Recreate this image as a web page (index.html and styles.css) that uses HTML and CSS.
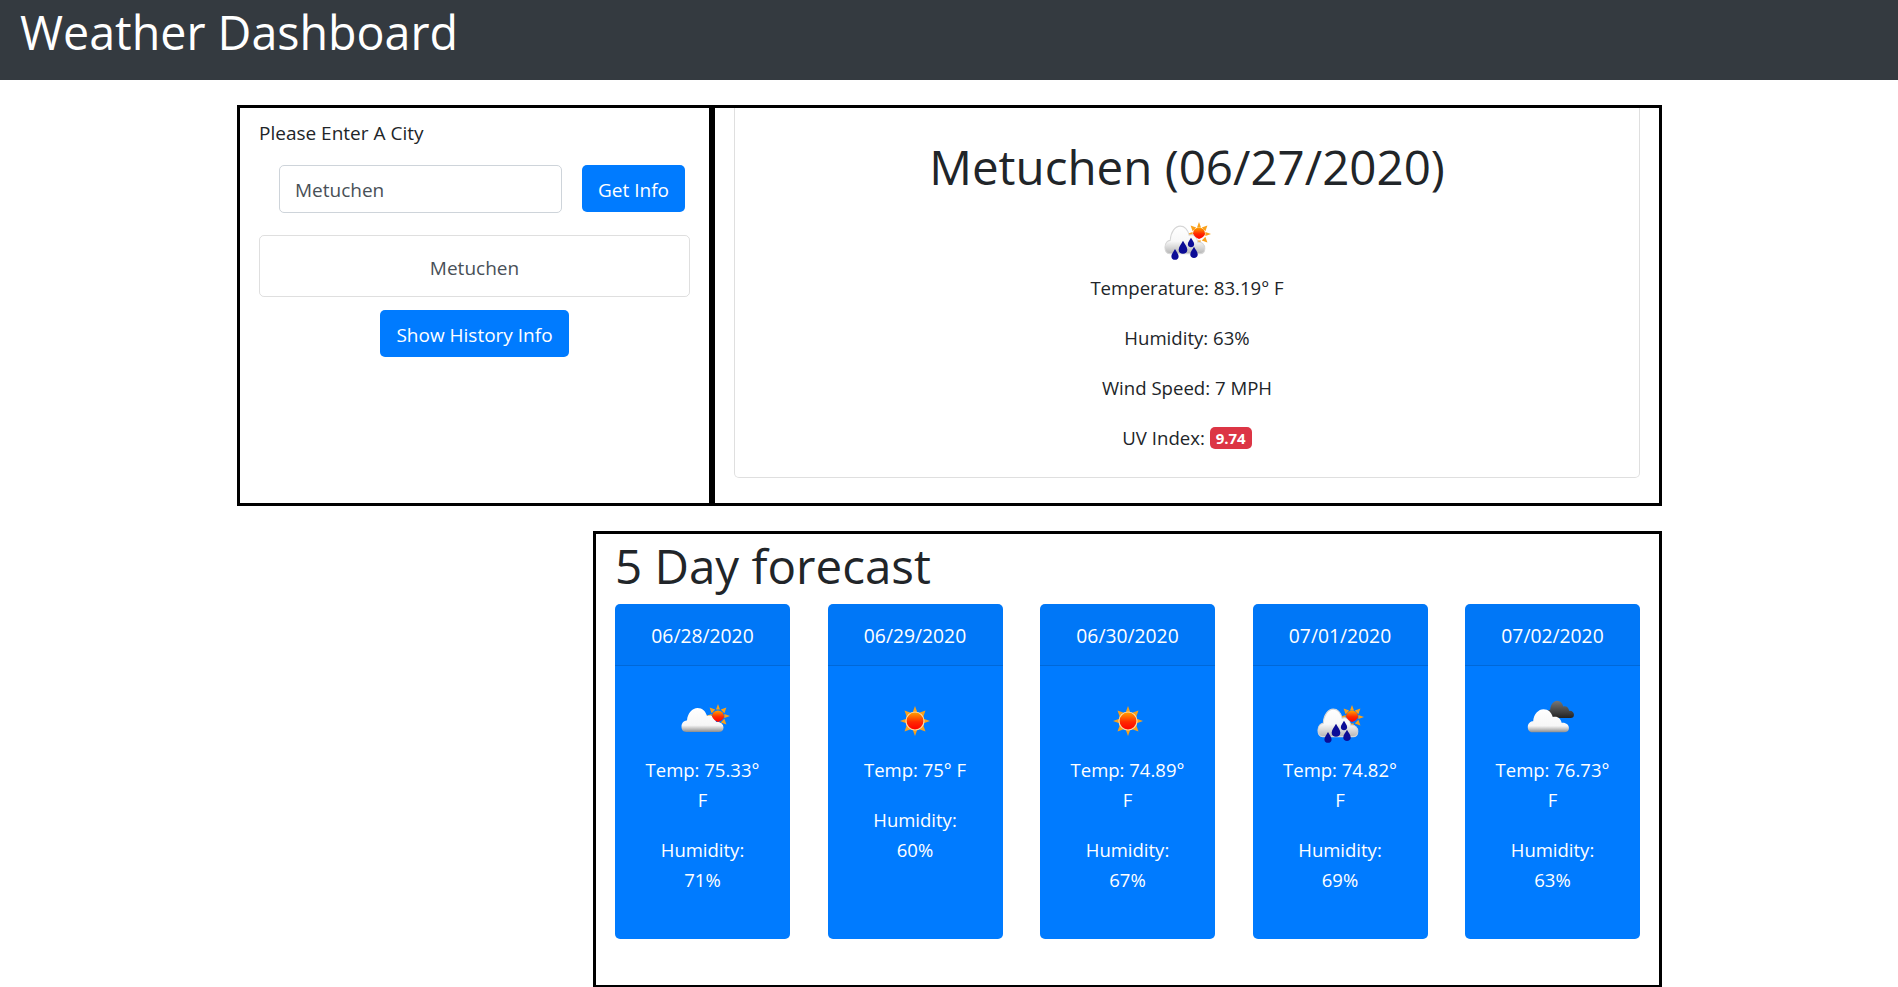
FILE: index.html
```html
<!DOCTYPE html>
<html lang="en">
<head>
  <meta charset="UTF-8">
  <meta name="viewport" content="width=device-width, initial-scale=1.0">
  <title>Weather Dashboard</title>
  <link rel="stylesheet" href="styles.css">
</head>
<body>

  <svg class="icon-defs" width="0" height="0" aria-hidden="true">
    <defs>
      <linearGradient id="cloud-fill" x1="0" y1="0" x2="0" y2="1">
        <stop offset="0" stop-color="#ffffff"/>
        <stop offset="0.72" stop-color="#f6f6f6"/>
        <stop offset="1" stop-color="#8d8d8d"/>
      </linearGradient>
      <linearGradient id="rain-cloud-fill" x1="0" y1="0" x2="0" y2="1">
        <stop offset="0" stop-color="#ffffff"/>
        <stop offset="0.55" stop-color="#f8f8f8"/>
        <stop offset="1" stop-color="#b5b5b5"/>
      </linearGradient>
      <linearGradient id="dark-fill" x1="0" y1="0" x2="0" y2="1">
        <stop offset="0" stop-color="#777777"/>
        <stop offset="0.7" stop-color="#3c3c3c"/>
        <stop offset="1" stop-color="#222222"/>
      </linearGradient>
      <linearGradient id="sun-fill" x1="0" y1="0" x2="0" y2="1">
        <stop offset="0" stop-color="#ffa500"/>
        <stop offset="0.55" stop-color="#ff2a00"/>
        <stop offset="1" stop-color="#ff0000"/>
      </linearGradient>
      <path id="cloud-shape" d="M16 41C12 41 11 38 11 35.500C11 31.500 14 29.500 16.500 29.500C17 22 22 17 27 17C32 17 35 20 36.500 25C41 23.500 45 26.500 45.500 31C50 30.500 53 33 53 36.500C53 39.500 51 41 48 41Z"/>
      <path id="drop-shape" d="M0 -5C1 -3 3 -1 3 1.200C3 3 1.600 4 0 4C-1.600 4 -3 3 -3 1.200C-3 -1 -1 -3 0 -5Z"/>
      <g id="sun-rays" fill="#f9a11b">
        <polygon points="0,-15 2.500,-8 -2.500,-8"/>
        <polygon points="0,15 2.500,8 -2.500,8"/>
        <polygon points="-15,0 -8,2.500 -8,-2.500"/>
        <polygon points="15,0 8,2.500 8,-2.500"/>
        <polygon points="-10.500,-10.500 -3.500,-8 -8,-3.500"/>
        <polygon points="10.500,-10.500 3.500,-8 8,-3.500"/>
        <polygon points="-10.500,10.500 -3.500,8 -8,3.500"/>
        <polygon points="10.500,10.500 3.500,8 8,3.500"/>
      </g>
      <symbol id="icon-clear" viewBox="0 0 62 62">
        <g transform="translate(31 30)">
          <use href="#sun-rays"/>
          <circle r="9" fill="url(#sun-fill)" stroke="#ffd9a0" stroke-width="1.200"/>
        </g>
      </symbol>
      <symbol id="icon-few-clouds" viewBox="0 0 62 62">
        <g transform="translate(46 25) scale(.8)"><use href="#sun-rays"/></g>
        <g transform="translate(-1.500 0)"><use href="#cloud-shape" fill="url(#cloud-fill)"/></g>
        <path d="M40 25.500A6 6 0 0 1 52 25.500C52 28 49 30 46 31C43 30 41 28 40 25.500Z" fill="url(#sun-fill)"/>
      </symbol>
      <symbol id="icon-rain" viewBox="0 0 62 62">
        <g transform="translate(43 26) scale(.8)"><use href="#sun-rays"/></g>
        <g transform="translate(-1.500 -1.500) scale(.95 1.150)"><use href="#cloud-shape" fill="url(#rain-cloud-fill)" stroke="#d6d6d6" stroke-width="1"/></g>
        <path d="M37 25.500A6 6 0 0 1 49 25.500C49 28 46 30 43 31C40 30 38 28 37 25.500Z" fill="url(#sun-fill)"/>
        <g fill="#0c0c96">
          <use href="#drop-shape" transform="translate(19 47) scale(1.200)"/>
          <use href="#drop-shape" transform="translate(27 40) scale(1.450)"/>
          <use href="#drop-shape" transform="translate(35 35) scale(1.050)"/>
          <use href="#drop-shape" transform="translate(38 45) scale(1.250)"/>
        </g>
      </symbol>
      <symbol id="icon-broken" viewBox="0 0 62 62">
        <g transform="translate(17.500 -2.500) scale(.65 .72)"><use href="#cloud-shape" fill="url(#dark-fill)"/></g>
        <g transform="translate(-5 2) scale(.98 .96)"><use href="#cloud-shape" fill="url(#cloud-fill)"/></g>
      </symbol>
    </defs>
  </svg>

  <header class="top-bar">
    <h1>Weather Dashboard</h1>
  </header>

  <main class="container">
    <section class="top-row">
      <div class="search-box">
        <label class="city-label" for="city-input">Please Enter A City</label>
        <div class="search-form">
          <input class="city-input" id="city-input" type="text" value="Metuchen">
          <button class="btn get-info">Get Info</button>
        </div>
        <ul class="history-list">
          <li>Metuchen</li>
        </ul>
        <div class="history-action">
          <button class="btn">Show History Info</button>
        </div>
      </div>

      <div class="current-box">
        <div class="current-card">
          <h1>Metuchen (06/27/2020)</h1>
          <svg class="icon"><use href="#icon-rain"/></svg>
          <p>Temperature: 83.19° F</p>
          <p>Humidity: 63%</p>
          <p>Wind Speed: 7 MPH</p>
          <p>UV Index: <span class="badge">9.74</span></p>
        </div>
      </div>
    </section>

    <section class="forecast-box">
      <h1>5 Day forecast</h1>
      <div class="forecast-row">
        <div class="day-card">
          <div class="day-header">06/28/2020</div>
          <div class="day-body">
            <svg class="icon"><use href="#icon-few-clouds"/></svg>
            <p>Temp: 75.33° F</p>
            <p>Humidity: 71%</p>
          </div>
        </div>
        <div class="day-card">
          <div class="day-header">06/29/2020</div>
          <div class="day-body">
            <svg class="icon"><use href="#icon-clear"/></svg>
            <p>Temp: 75° F</p>
            <p>Humidity: 60%</p>
          </div>
        </div>
        <div class="day-card">
          <div class="day-header">06/30/2020</div>
          <div class="day-body">
            <svg class="icon"><use href="#icon-clear"/></svg>
            <p>Temp: 74.89° F</p>
            <p>Humidity: 67%</p>
          </div>
        </div>
        <div class="day-card">
          <div class="day-header">07/01/2020</div>
          <div class="day-body">
            <svg class="icon"><use href="#icon-rain"/></svg>
            <p>Temp: 74.82° F</p>
            <p>Humidity: 69%</p>
          </div>
        </div>
        <div class="day-card">
          <div class="day-header">07/02/2020</div>
          <div class="day-body">
            <svg class="icon"><use href="#icon-broken"/></svg>
            <p>Temp: 76.73° F</p>
            <p>Humidity: 63%</p>
          </div>
        </div>
      </div>
    </section>
  </main>

</body>
</html>
```

FILE: styles.css
```css
* {
  box-sizing: border-box;
}

body {
  margin: 0;
  background-color: white;
  color: #212529;
  font-family: "Open Sans", sans-serif;
  font-size: 19px;
  line-height: 30px;
}

h1 {
  margin: 0;
  font-size: 47.500px;
  font-weight: 400;
  line-height: 60px;
}

p {
  margin: 0 0 20px;
}

.icon-defs {
  position: absolute;
}

.top-bar {
  height: 80px;
  padding: 2px 20px;
  background-color: #343a40;
  color: white;
}

.top-bar h1 {
  font-size: 46.600px;
}

.container {
  width: 1425px;
  margin: 25px 0 0 237px;
}

.top-row {
  display: grid;
  grid-template-columns: 475px 950px;
}

.search-box,
.current-box,
.forecast-box {
  border: 3px solid black;
}

.search-box {
  padding: 0 19px;
}

.city-label {
  display: block;
  margin-top: 10px;
}

.search-form {
  display: flex;
  gap: 20px;
  margin: 17px 5px 0 20px;
}

.city-input {
  width: 283px;
  height: 48px;
  padding: 2px 15px 0;
  border: 1.5px solid #ced4da;
  border-radius: 5px;
  color: #495057;
  font: inherit;
}

.btn {
  height: 47px;
  padding: 2px 16px 0;
  border: none;
  border-radius: 5px;
  background-color: #007bff;
  color: white;
  font: inherit;
  white-space: nowrap;
}

.get-info {
  flex: 1;
  padding: 2px 0 0;
}

.history-list {
  height: 62px;
  margin: 22px 0 0;
  padding: 17px 20px 0;
  border: 1.25px solid rgba(0, 0, 0, 0.125);
  border-radius: 5px;
  color: #495057;
  list-style: none;
  text-align: center;
}

.history-action {
  display: flex;
  justify-content: center;
  margin-top: 13px;
}

.current-box {
  padding: 0 19px 25px;
}

.current-card {
  height: 370px;
  padding: 29px 25px 0;
  border: 1.25px solid rgba(0, 0, 0, 0.125);
  border-top: none;
  border-radius: 0 0 5px 5px;
  font-size: 18.600px;
  text-align: center;
}

.current-card .icon {
  margin-top: 11px;
  margin-bottom: 3px;
}

.icon {
  display: block;
  width: 62px;
  height: 62px;
  margin: 0 auto;
  filter: blur(0.5px);
}

.badge {
  display: inline-block;
  padding: 3px 6px;
  border-radius: 5px;
  background-color: #dc3545;
  color: white;
  font-size: 15px;
  font-weight: 700;
  line-height: 16px;
  vertical-align: 1px;
}

.forecast-box {
  width: 1069px;
  margin: 25px 0 0 auto;
  padding: 2px 19px 46px;
}

.forecast-row {
  display: grid;
  grid-template-columns: repeat(5, 175px);
  justify-content: space-between;
  margin-top: 8px;
}

.day-card {
  height: 335px;
  border-radius: 5px;
  background-color: #007bff;
  color: white;
  font-size: 18.500px;
  text-align: center;
}

.day-header {
  height: 61.500px;
  padding: 17px 15px 0;
  border-bottom: 1.25px solid rgba(0, 0, 0, 0.125);
  border-radius: 5px 5px 0 0;
  background-color: rgba(0, 0, 0, 0.03);
  font-size: 19.300px;
}

.day-body {
  padding: 25px 26px;
}

.day-body .icon {
  margin-bottom: 2px;
}
```
